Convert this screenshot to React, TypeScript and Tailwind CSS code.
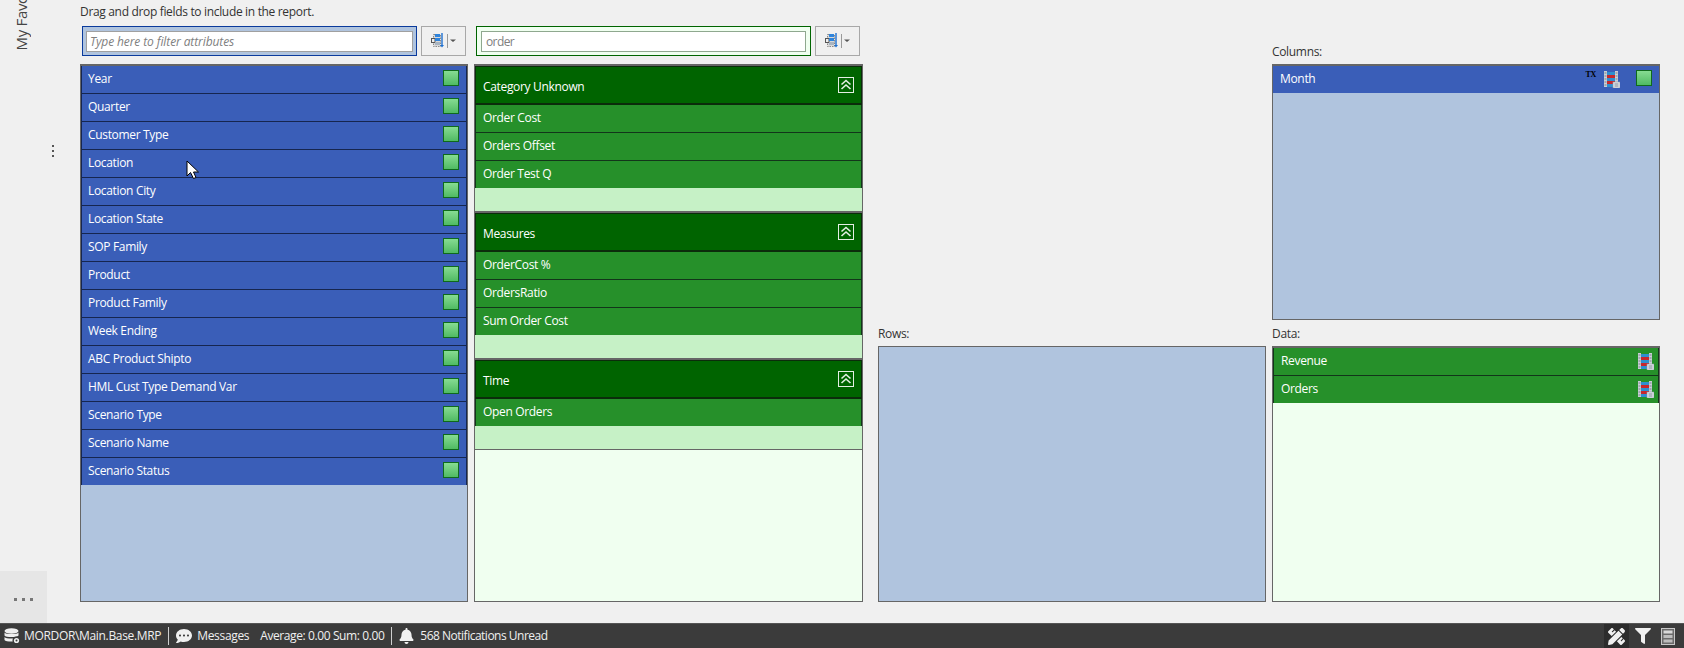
import { FaBell, FaCommentDots, FaFilter, FaPencilRuler } from 'react-icons/fa'

const attributes = [
  'Year',
  'Quarter',
  'Customer Type',
  'Location',
  'Location City',
  'Location State',
  'SOP Family',
  'Product',
  'Product Family',
  'Week Ending',
  'ABC Product Shipto',
  'HML Cust Type Demand Var',
  'Scenario Type',
  'Scenario Name',
  'Scenario Status',
]

const sections = [
  { name: 'Category Unknown', items: ['Order Cost', 'Orders Offset', 'Order Test Q'] },
  { name: 'Measures', items: ['OrderCost %', 'OrdersRatio', 'Sum Order Cost'] },
  { name: 'Time', items: ['Open Orders'] },
]

function GreenBox() {
  return (
    <span className="block w-4 h-4 border border-[#0f6a1c] bg-gradient-to-b from-[#86dc92] to-[#4fbb63]" />
  )
}

function SortIcon() {
  return (
    <svg width="26" height="16" viewBox="0 0 26 16">
      <rect x="2.5" y="1.5" width="7" height="12" fill="#d8d8d8" stroke="#8a8a8a" strokeDasharray="1.5 1" />
      <rect x="0.5" y="5.5" width="3.5" height="4" fill="#eee" stroke="#555" />
      <rect x="4" y="1" width="5" height="3" fill="#2f84dc" />
      <rect x="4" y="5" width="5" height="3" fill="#2f84dc" />
      <rect x="4" y="9" width="5" height="3" fill="#a9b4c0" />
      <path d="M11 0v12" stroke="#1d6fd0" strokeWidth="1.4" />
      <path d="M9 12h4l-2 2.5z" fill="#1d6fd0" />
      <path d="M16.5 1v14" stroke="#9a9a9a" />
      <path d="M19 6.5h6l-3 2.5z" fill="#555" />
    </svg>
  )
}

function AbacusIcon() {
  return (
    <svg width="16" height="17" viewBox="0 0 16 17">
      <rect x="0" y="0" width="3" height="16" fill="#c9ced6" />
      <rect x="11" y="0" width="3" height="12" fill="#c9ced6" />
      <path d="M0.5 2h2M0.5 5h2M0.5 8h2M0.5 11h2M0.5 14h2M11.5 2h2M11.5 5h2M11.5 8h2" stroke="#7c828c" />
      <rect x="3" y="1" width="8" height="3" fill="#2e8fd0" />
      <rect x="3" y="4" width="8" height="3" fill="#c8262c" />
      <rect x="3" y="7" width="8" height="3" fill="#2e8fd0" />
      <rect x="3" y="10" width="8" height="3" fill="#c8262c" />
      <rect x="3" y="13" width="6" height="3" fill="#2e8fd0" />
      <rect x="9" y="11" width="7" height="6" fill="#e6e9ee" stroke="#8d96a3" strokeWidth="0.6" />
      <path d="M10.5 13h4M10.5 15h4" stroke="#5f6a78" strokeWidth="0.8" />
    </svg>
  )
}

function CollapseIcon() {
  return (
    <svg width="16" height="16" viewBox="0 0 16 16" fill="none">
      <rect x="0.5" y="0.5" width="15" height="15" stroke="#e4eee4" />
      <path d="M3.5 7.5 8 3.5l4.5 4M3.5 12 8 8l4.5 4" stroke="#e4eee4" strokeWidth="1.6" />
    </svg>
  )
}

function DbIcon() {
  return (
    <svg width="17" height="17" viewBox="0 0 17 17">
      <ellipse cx="7.5" cy="3" rx="7" ry="2.8" fill="#f0f0f0" />
      <path d="M0.5 4.5c1 2 13 2 14 0v3c-1 2-13 2-14 0z" fill="#f0f0f0" />
      <path d="M0.5 9c1 2 13 2 14 0v3c-1 2-13 2-14 0z" fill="#f0f0f0" />
      <circle cx="12.5" cy="12.5" r="4" fill="#3b3b3b" />
      <circle cx="12.5" cy="12.5" r="2.6" fill="#f0f0f0" />
      <circle cx="12.5" cy="12.5" r="1" fill="#3b3b3b" />
    </svg>
  )
}

function CalcIcon() {
  return (
    <svg width="14" height="17" viewBox="0 0 14 17">
      <rect x="0.5" y="0.5" width="13" height="16" fill="#6a6a6a" stroke="#c8c8c8" />
      <rect x="2.5" y="2.5" width="9" height="3" fill="#d8d8d8" />
      <rect x="2.5" y="7" width="9" height="3" fill="#bdbdbd" />
      <rect x="2.5" y="11.5" width="9" height="3" fill="#bdbdbd" />
    </svg>
  )
}

function FilterBar({ placeholder, value, green }: { placeholder?: string; value?: string; green?: boolean }) {
  return (
    <div className="flex gap-1 h-[30px] ml-[2px]">
      <div
        className={
          green
            ? 'w-[335px] border border-[#006400] bg-[#f0fff0] px-1 py-1'
            : 'w-[335px] border border-[#0a3a9c] bg-[#b0c4de] px-[3px] py-1'
        }
      >
        <input
          readOnly
          value={value ?? ''}
          placeholder={placeholder}
          className={
            green
              ? 'block w-full h-[21px] border border-[#8fa88f] bg-white pl-1 text-[12px] tracking-[-0.6px] text-[#808080] outline-none'
              : 'block w-full h-[21px] border border-[#a0a0a0] bg-white pl-[3px] text-[12px] tracking-[-0.1px] italic text-[#808080] placeholder:text-[#808080] outline-none'
          }
        />
      </div>
      <button className="w-[45px] border border-[#a8a8a8] flex items-center justify-center">
        <SortIcon />
      </button>
    </div>
  )
}

function Label({ children }: { children: string }) {
  return <div className="h-[18px] text-[12px] leading-[11px] text-[#333]">{children}</div>
}

function Row({ name, children, green }: { name: string; children?: React.ReactNode; green?: boolean }) {
  return (
    <div
      className={
        green
          ? 'h-[28px] flex items-center justify-between pl-[7px] border-b border-[#12351a] bg-[#26902a] text-white text-[12px] last:h-[27px] last:border-b-0'
          : 'h-[28px] flex items-center justify-between pl-[6px] border-b border-[#16264f] bg-[#3a5eb8] text-white text-[12px] last:border-b-0 last:h-[27px]'
      }
    >
      <span className="pb-[2px]">{name}</span>
      {children}
    </div>
  )
}

export default function App() {
  return (
    <div
      className="w-[1684px] h-[648px] flex flex-col bg-[#f0f0f0] overflow-hidden tracking-[-0.33px]"
      style={{ fontFamily: '"Open Sans", "Noto Sans", sans-serif' }}
    >
      <div className="h-[623px] flex relative">
        {/* sidebar */}
        <div className="w-[80px] flex flex-col">
          <div className="h-[50px] pl-[11px] flex items-end overflow-hidden">
            <span className="[writing-mode:vertical-rl] rotate-180 text-[15px] leading-[20px] text-[#444] whitespace-nowrap">
              My Favorites
            </span>
          </div>
          <div className="pl-[52px] pt-[95px] flex flex-col gap-[3px]">
            <span className="w-[2px] h-[2px] bg-[#555]" />
            <span className="w-[2px] h-[2px] bg-[#555]" />
            <span className="w-[2px] h-[2px] bg-[#555]" />
          </div>
          <div className="mt-auto w-[47px] h-[52px] bg-[#e6e6e6] flex items-center justify-center gap-[5px] pt-1">
            <span className="w-[3px] h-[3px] bg-[#777]" />
            <span className="w-[3px] h-[3px] bg-[#777]" />
            <span className="w-[3px] h-[3px] bg-[#777]" />
          </div>
        </div>

        {/* attributes */}
        <div className="w-[388px] mr-[6px] flex flex-col">
          <div className="h-[26px] text-[12px] leading-[24px] text-[#333] whitespace-nowrap">
            Drag and drop fields to include in the report.
          </div>
          <FilterBar placeholder="Type here to filter attributes" />
          <div className="mt-2 h-[538px] border-x border-b border-t-2 border-[#666] bg-[#b0c4de]">
            <div className="border-x border-[#16264f]">
              {attributes.map((a) => (
                <Row key={a} name={a}>
                  <span className="pr-[7px] pb-[4px]">
                    <GreenBox />
                  </span>
                </Row>
              ))}
            </div>
          </div>
        </div>

        {/* measures */}
        <div className="w-[389px] mr-[15px] flex flex-col">
          <div className="h-[26px]" />
          <FilterBar value="order" green />
          <div className="mt-2 h-[538px] border-x border-b border-t-2 border-[#666] bg-[#f0fff0]">
            {sections.map((s, i) => (
              <div key={s.name} className={i === 2 ? 'border-b border-[#666]' : 'border-b-2 border-[#666]'}>
                <div className="h-[39px] flex items-center justify-between pl-[7px] pr-[7px] bg-[#006400] border border-b-2 border-[#0b2c0b] text-white text-[12px]">
                  <span className="pt-[3px]">{s.name}</span>
                  <CollapseIcon />
                </div>
                <div className="border-x border-[#12351a]">
                  {s.items.map((item) => (
                    <Row key={item} name={item} green />
                  ))}
                </div>
                <div className="h-[23px] bg-[#c6f1c6]" />
              </div>
            ))}
          </div>
        </div>

        {/* rows */}
        <div className="w-[388px] mr-[6px] h-[602px] flex flex-col justify-end">
          <Label>Rows:</Label>
          <div className="h-[256px] border border-[#666] bg-[#b0c4de]" />
        </div>

        {/* columns + data */}
        <div className="w-[388px] flex flex-col">
          <div className="h-[46px]" />
          <Label>Columns:</Label>
          <div className="h-[256px] border-x border-b border-t-2 border-[#666] bg-[#b0c4de]">
            <div className="h-[27px] flex items-center pl-[7px] pr-[7px] bg-[#3a5eb8] text-white text-[12px]">
              <span className="pb-[2px]">Month</span>
              <span
                className="ml-auto mb-[9px] text-[8px] leading-[8px] font-bold text-black"
                style={{ fontFamily: '"Liberation Serif", serif' }}
              >
                TX
              </span>
              <span className="ml-[8px]">
                <AbacusIcon />
              </span>
              <span className="ml-[16px] pb-[3px]">
                <GreenBox />
              </span>
            </div>
          </div>
          <div className="h-[8px]" />
          <Label>Data:</Label>
          <div className="h-[256px] border-x border-b border-t-2 border-[#666] bg-[#f0fff0]">
            <div className="border-x border-[#12351a]">
              <Row name="Revenue" green>
                <span className="pr-[4px]">
                  <AbacusIcon />
                </span>
              </Row>
              <Row name="Orders" green>
                <span className="pr-[4px]">
                  <AbacusIcon />
                </span>
              </Row>
            </div>
          </div>
        </div>

        {/* mouse pointer */}
        <svg className="absolute left-[186px] top-[160px]" width="14" height="20" viewBox="0 0 14 20">
          <path d="M1 1v15l3.5-3.5L7.5 18.5l2.5-1L7.5 12h5z" fill="#fff" stroke="#000" />
        </svg>
      </div>

      {/* status bar */}
      <div className="h-[25px] flex items-center bg-[#3b3b3b] text-[#f0f0f0] text-[12px] border-t border-[#555]">
        <span className="ml-[4px]">
          <DbIcon />
        </span>
        <span className="ml-[3px]">MORDOR\Main.Base.MRP</span>
        <span className="ml-[7px] w-px h-[18px] bg-[#cfcfcf]" />
        <FaCommentDots className="ml-[7px] w-[16px] h-[16px]" />
        <span className="ml-[5px]">Messages</span>
        <span className="ml-[11px] tracking-[-0.4px]">Average: 0.00 Sum: 0.00</span>
        <span className="ml-[7px] w-px h-[18px] bg-[#cfcfcf]" />
        <FaBell className="ml-[7px] w-[15px] h-[16px]" />
        <span className="ml-[6px] tracking-[-0.5px]">568 Notifications Unread</span>
        <div className="ml-auto h-full w-[25px] flex items-center justify-center bg-[#2c2c2c]">
          <FaPencilRuler className="w-[17px] h-[17px]" />
        </div>
        <FaFilter className="ml-[6px] w-[16px] h-[16px]" />
        <span className="ml-[10px] mr-[9px]">
          <CalcIcon />
        </span>
      </div>
    </div>
  )
}
